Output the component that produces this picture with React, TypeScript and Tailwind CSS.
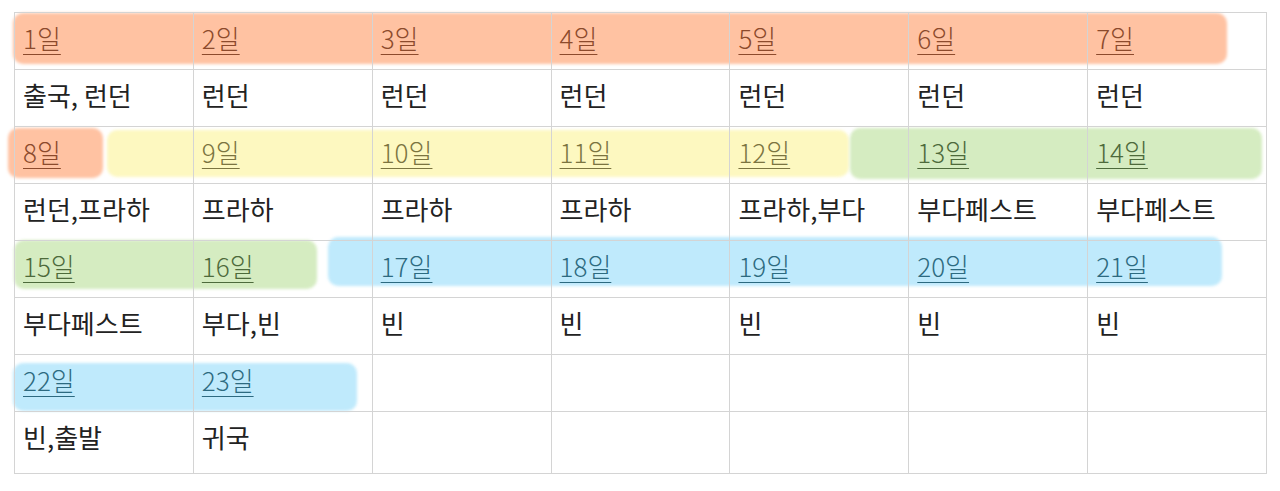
const FONT = "font-['Noto_Sans_CJK_KR','Noto_Sans',sans-serif]";

type Day = { label: string; color: string };

const ORANGE = "text-[#8c4a2c]";
const YELLOW = "text-[#7b7440]";
const GREEN = "text-[#4d6a3b]";
const BLUE = "text-[#2d6a80]";

// 주 단위 (날짜 줄, 일정 줄)
const WEEKS: { days: Day[]; plans: string[] }[] = [
  {
    days: ["1일", "2일", "3일", "4일", "5일", "6일", "7일"].map((label) => ({ label, color: ORANGE })),
    plans: ["출국, 런던", "런던", "런던", "런던", "런던", "런던", "런던"],
  },
  {
    days: [
      { label: "8일", color: ORANGE },
      { label: "9일", color: YELLOW },
      { label: "10일", color: YELLOW },
      { label: "11일", color: YELLOW },
      { label: "12일", color: YELLOW },
      { label: "13일", color: GREEN },
      { label: "14일", color: GREEN },
    ],
    plans: ["런던,프라하", "프라하", "프라하", "프라하", "프라하,부다", "부다페스트", "부다페스트"],
  },
  {
    days: [
      { label: "15일", color: GREEN },
      { label: "16일", color: GREEN },
      { label: "17일", color: BLUE },
      { label: "18일", color: BLUE },
      { label: "19일", color: BLUE },
      { label: "20일", color: BLUE },
      { label: "21일", color: BLUE },
    ],
    plans: ["부다페스트", "부다,빈", "빈", "빈", "빈", "빈", "빈"],
  },
  {
    days: [
      { label: "22일", color: BLUE },
      { label: "23일", color: BLUE },
    ],
    plans: ["빈,출발", "귀국"],
  },
];

// 형광펜 칠 (표 기준 좌표)
const MARKS = [
  { cls: "left-[-1px] top-[1px] w-[1214px] h-[51px] bg-[#ffc2a2]" },
  { cls: "left-[-6px] top-[116px] w-[95px] h-[50px] bg-[#ffc2a2]" },
  { cls: "left-[93px] top-[118px] w-[742px] h-[47px] bg-[#fdf8c0]" },
  { cls: "left-[836px] top-[116px] w-[412px] h-[51px] bg-[#d5ecc1]" },
  { cls: "left-[0px] top-[228px] w-[303px] h-[49px] bg-[#d5ecc1]" },
  { cls: "left-[314px] top-[225px] w-[894px] h-[49px] bg-[#bfeafc]" },
  { cls: "left-[-1px] top-[351px] w-[344px] h-[48px] bg-[#bfeafc]" },
];

function Cell({ children, last }: { children?: React.ReactNode; last?: boolean }) {
  return (
    <div
      className={`${last ? "h-[62px]" : "h-[57px]"} border-r border-b border-[#d4d4d4] pl-[8px] pt-[7px] text-[26px] leading-[36px] whitespace-nowrap`}
    >
      {children}
    </div>
  );
}

export default function App() {
  return (
    <div className={`${FONT} min-h-[491px] bg-white pt-[12px] pl-[14px]`}>
      <div className="relative w-[1253px]">
        {/* 형광펜 */}
        <div className="absolute inset-0 pointer-events-none">
          {MARKS.map((m, i) => (
            <div key={i} className={`absolute rounded-[10px] blur-[1.5px] ${m.cls}`} />
          ))}
        </div>

        <div className="relative grid grid-cols-7 border-l border-t border-[#d4d4d4]">
          {WEEKS.map((w, wi) => {
            const last = wi === WEEKS.length - 1;
            return [
              ...Array.from({ length: 7 }, (_, i) => {
                const d = w.days[i];
                return (
                  <Cell key={`d${wi}-${i}`}>
                    {d && (
                      <span className={`${d.color} font-light underline decoration-1 underline-offset-[5px]`}>
                        {d.label}
                      </span>
                    )}
                  </Cell>
                );
              }),
              ...Array.from({ length: 7 }, (_, i) => (
                <Cell key={`p${wi}-${i}`} last={last}>
                  {w.plans[i] && <span className="text-[#222]">{w.plans[i]}</span>}
                </Cell>
              )),
            ];
          })}
        </div>
      </div>
    </div>
  );
}
